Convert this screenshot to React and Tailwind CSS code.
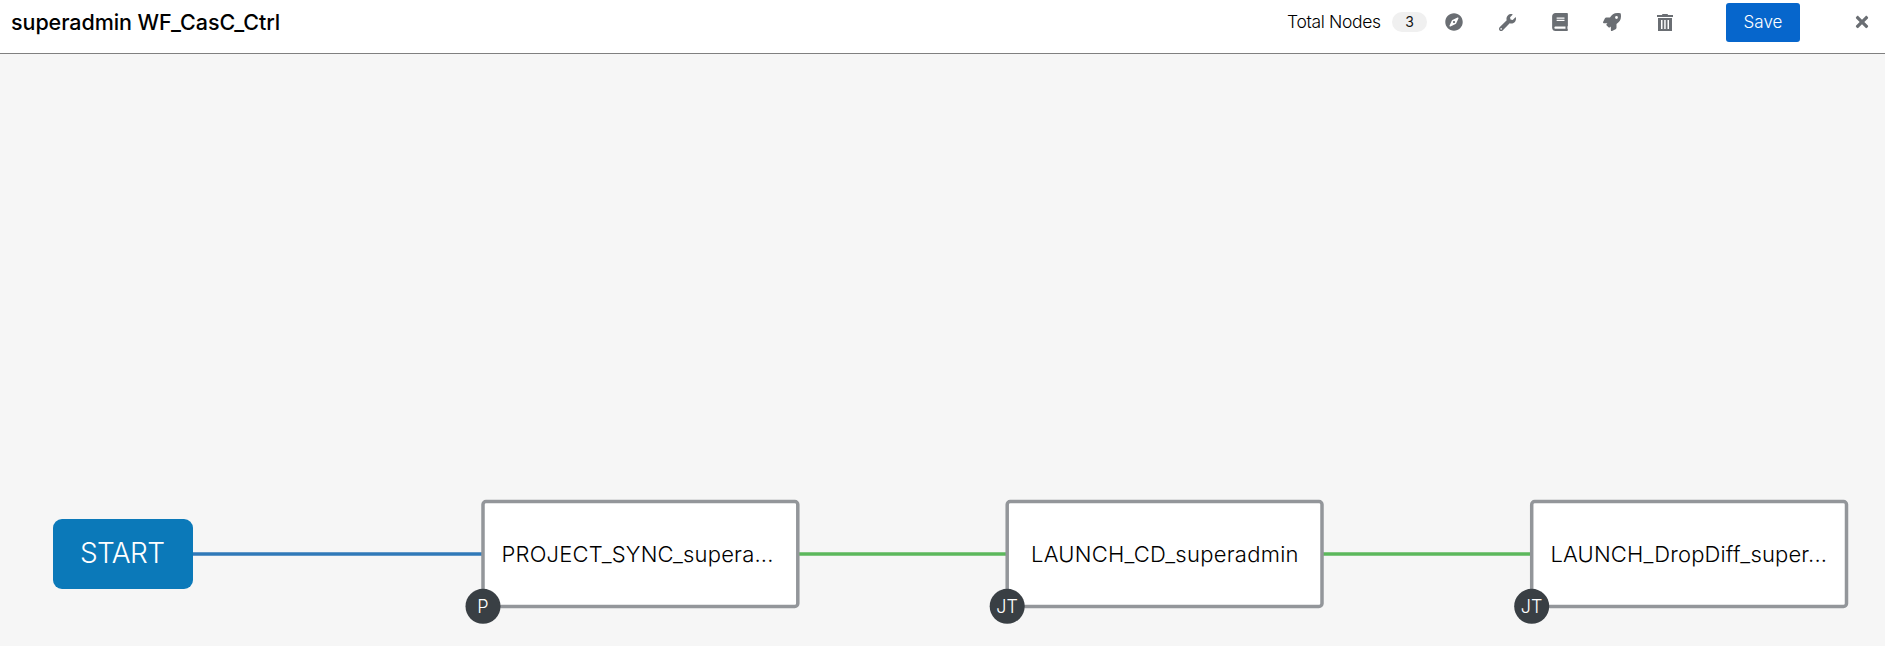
import { FaCompass, FaWrench, FaBook, FaRocket, FaTimes } from "react-icons/fa";

function TrashIcon() {
  return (
    <svg viewBox="0 0 16 17" className="h-[17px] w-4" fill="currentColor">
      <path fillRule="evenodd" d="M5.5 0h5l.6 1H16v2H0V1h4.900zM1 4h14v13H1zM4 6v9h1.500V6zM7.200 6v9h1.500V6zM10.500 6v9H12V6z" />
    </svg>
  );
}

const tools = [
  { name: "Legend", icon: <FaCompass className="size-[18px]" /> },
  { name: "Tools", icon: <FaWrench className="size-[17px]" /> },
  { name: "Documentation", icon: <FaBook className="size-[18px]" /> },
  { name: "Launch", icon: <FaRocket className="size-[18px]" /> },
  { name: "Delete", icon: <TrashIcon /> },
];

const nodes = [
  { x: 483, label: "PROJECT_SYNC_supera...", from: 501.5, width: 272, badge: "P" },
  { x: 1007.2, label: "LAUNCH_CD_superadmin", from: 1031, width: 267.5, badge: "JT" },
  { x: 1531.700, label: "LAUNCH_DropDiff_super...", from: 1550.5, width: 276.5, badge: "JT" },
];

function Node({ x, label, from, width, badge }) {
  return (
    <g>
      <rect x={x} y="501.500" width="314.800" height="105" rx="3" fill="#fff" stroke="#93969a" strokeWidth="3.500" />
      <text x={from} y="562" textLength={width} lengthAdjust="spacing" fontSize="22" fontWeight="300" fill="#000">{label}</text>
      <circle cx={x} cy="606.300" r="17.500" fill="#393f44" />
      <text x={x} y="612.800" textAnchor="middle" fontSize="18" fontWeight="300" fill="#fff">{badge}</text>
    </g>
  );
}

export default function App() {
  return (
    <div className="flex h-[646px] w-[1885px] flex-col overflow-hidden bg-[#f6f6f6] font-['Inter',sans-serif] text-[#151515]">
      <header className="flex h-[54px] shrink-0 items-start border-b border-[#808080] bg-white pl-[11px]">
        <h1 className="mt-[7px] text-[21.5px] leading-[30px] font-medium tracking-[-0.003em] text-black">superadmin WF_CasC_Ctrl</h1>
        <div className="ml-auto flex h-11 items-center">
          <span className="w-[105px] pt-px text-[17.5px] font-[350] tracking-[-0.02em] whitespace-nowrap text-black">Total Nodes</span>
          <span className="flex h-5 w-[35px] items-center justify-center rounded-full bg-[#f0f0f0] text-sm">3</span>
          <div className="flex pl-px text-[#6a6e73]">
            {tools.map((tool) => (
              <button key={tool.name} aria-label={tool.name} className="flex w-[52.7px] items-center justify-center">
                {tool.icon}
              </button>
            ))}
          </div>
          <button className="ml-[34.5px] h-[39px] w-[74px] rounded-[3px] bg-[#0666cc] pt-px text-[17px] font-light text-white">Save</button>
          <button aria-label="Close" className="mr-[14px] ml-[53px] flex w-[18px] justify-center text-[#6a6e73]">
            <FaTimes className="size-[18px]" />
          </button>
        </div>
      </header>
      <main className="flex-1">
        <svg viewBox="0 54 1885 592" className="block h-[592px] w-[1885px]">
          <g strokeWidth="3.500">
            <path d="M193 553.900H483" stroke="#3079b8" />
            <path d="M798 553.900H1007M1322 553.900H1532" stroke="#5cb85c" />
          </g>
          <rect x="53" y="519" width="140" height="70" rx="9" fill="#0b79b9" />
          <text x="80" y="562.700" textLength="85" fontSize="28" fontWeight="300" fill="#fff">START</text>
          {nodes.map((node) => <Node key={node.x} {...node} />)}
        </svg>
      </main>
    </div>
  );
}
